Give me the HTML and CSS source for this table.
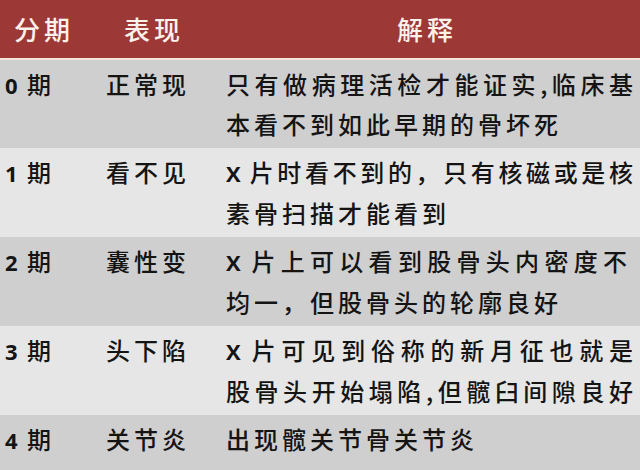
FILE: index.html
```html
<!DOCTYPE html>
<html lang="zh-CN">
<head>
<meta charset="utf-8">
<title>股骨头坏死分期</title>
<link rel="stylesheet" href="styles.css">
</head>
<body>
<div class="table">
  <div class="row head">
    <div class="c1">分期</div>
    <div class="c2">表现</div>
    <div class="c3">解释</div>
  </div>
  <div class="row dark">
    <div class="c1"><span class="num">0</span> 期</div>
    <div class="c2">正常现</div>
    <div class="c3"><span class="ln just">只有做病理活检才能证实,临床基</span><span class="ln">本看不到如此早期的骨坏死</span></div>
  </div>
  <div class="row light">
    <div class="c1"><span class="num">1</span> 期</div>
    <div class="c2">看不见</div>
    <div class="c3"><span class="ln just"><span class="num">X</span> 片时看不到的，只有核磁或是核</span><span class="ln">素骨扫描才能看到</span></div>
  </div>
  <div class="row dark">
    <div class="c1"><span class="num">2</span> 期</div>
    <div class="c2">囊性变</div>
    <div class="c3"><span class="ln just short"><span class="num">X</span> 片上可以看到股骨头内密度不</span><span class="ln">均一，但股骨头的轮廓良好</span></div>
  </div>
  <div class="row light">
    <div class="c1"><span class="num">3</span> 期</div>
    <div class="c2">头下陷</div>
    <div class="c3"><span class="ln just"><span class="num">X</span> 片可见到俗称的新月征也就是</span><span class="ln just">股骨头开始塌陷,但髋臼间隙良好</span></div>
  </div>
  <div class="row dark last">
    <div class="c1"><span class="num">4</span> 期</div>
    <div class="c2">关节炎</div>
    <div class="c3"><span class="ln">出现髋关节骨关节炎</span></div>
  </div>
</div>
</body>
</html>
```
FILE: styles.css
```css
html, body {
  margin: 0;
  padding: 0;
}
body {
  width: 640px;
  height: 470px;
  overflow: hidden;
  background: #cfcfcf;
  font-family: "Noto Sans CJK SC", "Noto Sans", sans-serif;
  font-weight: 500;
  color: #141414;
}
.table {
  display: flex;
  flex-direction: column;
}
.row {
  display: grid;
  grid-template-columns: 96px 124px 1fr;
  font-size: 24px;
  line-height: 40px;
  letter-spacing: 4px;
  padding: 4px 0;
  white-space: nowrap;
}
.row.head {
  height: 58px;
  padding: 0;
  align-items: center;
  background: #9c3836;
  color: #fdf1ec;
  font-size: 26px;
  border-bottom: 2px solid #f1e4d8;
}
.row.head .c1 { text-align: center; padding: 0 8px 0 0; }
.row.head .c2 { text-align: center; padding: 0 8px 0 0; }
.row.head .c3 { text-align: center; padding: 0 6px 0 0; }
.dark { background: #cfcfcf; }
.light { background: #e6e6e6; }
.row.last { padding-bottom: 20px; }
.c1 { padding-left: 5px; }
.c2 { padding-left: 10px; }
.c3 { padding-left: 6px; padding-right: 6px; }
.ln { display: block; }
.ln.just {
  letter-spacing: 1px;
  text-align: justify;
  text-align-last: justify;
  text-justify: inter-character;
}
.ln.just.short { margin-right: 6px; }
.num {
  font-family: "Open Sans", "Noto Sans", sans-serif;
  font-weight: 700;
  font-size: 22px;
  letter-spacing: 0;
}
```
